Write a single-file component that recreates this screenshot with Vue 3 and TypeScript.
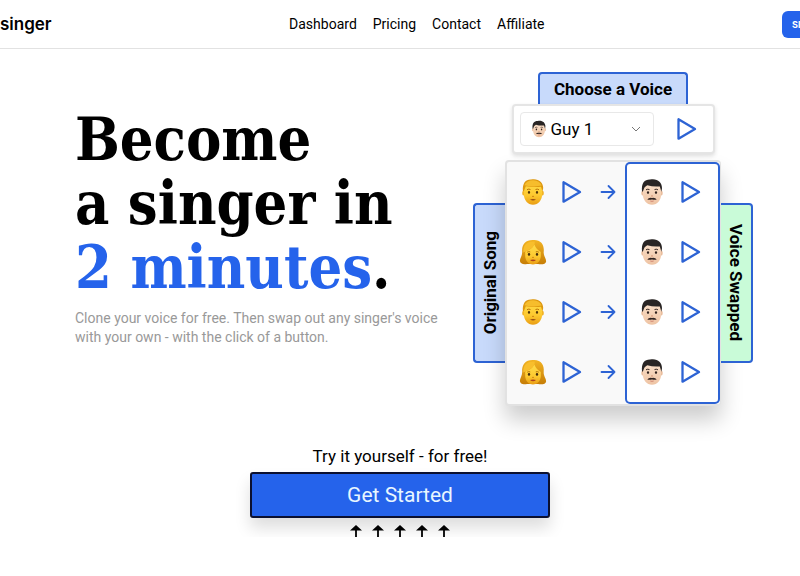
<script setup lang="ts">
import { ref } from 'vue'

interface SongRow {
  id: number
  singer: 'man' | 'woman'
}

const links: string[] = ['Dashboard', 'Pricing', 'Contact', 'Affiliate']
const rows: SongRow[] = [
  { id: 1, singer: 'man' },
  { id: 2, singer: 'woman' },
  { id: 3, singer: 'man' },
  { id: 4, singer: 'woman' },
]
const voice = ref<string>('Guy 1')
</script>

<template>
  <svg class="sprite" aria-hidden="true">
    <defs>
      <linearGradient id="gold" x1="0" y1="0" x2="0" y2="1">
        <stop offset="0" stop-color="#ffdc4a" />
        <stop offset=".6" stop-color="#fdc92f" />
        <stop offset="1" stop-color="#e99d14" />
      </linearGradient>
      <linearGradient id="hair" x1="0" y1="0" x2="0" y2="1">
        <stop offset="0" stop-color="#f3b423" />
        <stop offset="1" stop-color="#c67d06" />
      </linearGradient>
      <linearGradient id="skin" x1="0" y1="0" x2="0" y2="1">
        <stop offset="0" stop-color="#fbe3cd" />
        <stop offset="1" stop-color="#eec3a3" />
      </linearGradient>
    </defs>
    <symbol id="man" viewBox="0 0 28 28">
      <ellipse cx="4.7" cy="15" rx="1.500" ry="2.600" fill="#f0ad20" />
      <ellipse cx="23.300" cy="15" rx="1.500" ry="2.600" fill="#f0ad20" />
      <path d="M4.800 10Q5 3 14 3t9.200 7v6c0 6-4 10.800-9.200 10.800S4.800 22 4.800 16z" fill="url(#gold)" />
      <path d="M3.900 13C3.200 5 6.800 1.300 12 1.500c7-1.500 12.200 2.500 12.200 8.500l-.7 3.500-1.500-4.700Q14 9.500 6.800 8.300L4.900 13z" fill="#dd9810" />
      <path d="M5.300 7.200Q8 2 14.500 2.300q6 .2 8.200 5.300-8 1.800-17.400-.4z" fill="#f6bd2c" />
      <path d="M8 11.700q1.800-1.100 3.500-.2m5 0q1.800-.9 3.500.2" fill="none" stroke="#b87509" stroke-width="1" />
      <ellipse cx="10" cy="14.400" rx="1.100" ry="1.400" fill="#533708" />
      <ellipse cx="18" cy="14.400" rx="1.100" ry="1.400" fill="#533708" />
      <path d="M13 18.200q1 .7 2 0" fill="none" stroke="#cf850e" />
      <path d="M11 21.400q3-.8 6 0-3 2-6 0z" fill="#944b14" />
    </symbol>
    <symbol id="woman" viewBox="0 0 28 28">
      <path d="M3.200 14C2.500 6 7 1.500 14.500 2 22 1.600 25.500 7 24.700 14c-.3 4 2.600 6.500 2.400 9.500-.2 3-5 3.200-8 2.500H8c-4 .8-7.700-.5-7-4 .5-2.500 2-4 2.200-8z" fill="url(#hair)" />
      <path d="M6.200 13.500Q13 11.500 15.300 6.500q2 5 6.500 7.500v4c0 5-4 8.500-7.800 8.500S6.200 23 6.200 18z" fill="url(#gold)" />
      <path d="M4.300 14.500C3.600 7 8 2.800 15.700 3.500q.8 4-4.700 7.800-3.500 1.700-6.700 3.200z" fill="#f8be2c" />
      <path d="M8.200 14.200q1.500-1 3-.3m5.600 0q1.500-.7 3 .3" fill="none" stroke="#aa6807" stroke-width=".9" />
      <ellipse cx="10" cy="16.400" rx="1.200" ry="1.400" fill="#432b0a" />
      <ellipse cx="18" cy="16.400" rx="1.200" ry="1.400" fill="#432b0a" />
      <path d="M13 19.200q1 .7 2 0" fill="none" stroke="#d08a14" />
      <path d="M11 22q3-.9 6 0-3 2.500-6 0z" fill="#b0401d" />
    </symbol>
    <symbol id="guy" viewBox="0 0 28 28">
      <ellipse cx="4.800" cy="15" rx="1.500" ry="2.600" fill="#e7b998" />
      <ellipse cx="23.200" cy="15" rx="1.500" ry="2.600" fill="#e7b998" />
      <path d="M4.800 10Q5 3 14 3t9.200 7v6c0 6-4 10.800-9.200 10.800S4.800 22 4.800 16z" fill="url(#skin)" />
      <path d="M4 13.500C3.200 5 6.500 1.500 12 1.600c7-1.500 12 2.400 12 8.600l-.6 3.500-1.600-5.200q-7 .5-12.500-1.200-2 1-3 2.500L4.900 13.500z" fill="#292524" />
      <path d="M8 11.800q1.800-1.100 3.500-.2m5 0q1.700-.9 3.500.2" fill="none" stroke="#3a2a25" stroke-width="1" />
      <ellipse cx="10" cy="14.600" rx="1.100" ry="1.300" fill="#30211c" />
      <ellipse cx="18" cy="14.600" rx="1.100" ry="1.300" fill="#30211c" />
      <path d="M13 17.800q1 .7 2 0" fill="none" stroke="#d19577" />
      <path d="M9.300 21.600q1.500-2.300 4.700-1.700 3.200-.6 4.700 1.700-2.300.5-4.700-.2-2.400.7-4.700.2z" fill="#302421" />
      <path d="M12.300 23q1.700.7 3.400 0" fill="none" stroke="#c97868" stroke-width=".8" />
    </symbol>
    <symbol id="play" viewBox="0 0 20 24">
      <path d="M1.500 2.300v19.400L18 12z" fill="none" stroke="#2d63d4" stroke-width="2.300" stroke-linejoin="round" />
    </symbol>
    <symbol id="right" viewBox="0 0 16 16">
      <path d="M1.500 8h13M8.500 2l6 6-6 6" fill="none" stroke="#2d63d4" stroke-width="1.800" stroke-linecap="round" stroke-linejoin="round" />
    </symbol>
  </svg>

  <header class="topbar">
    <div class="topbar-row">
      <a class="brand" href="#">singer</a>
      <nav class="links">
        <a v-for="link in links" :key="link" href="#">{{ link }}</a>
      </nav>
      <button class="sign" type="button">SIGN IN</button>
    </div>
  </header>

  <main>
    <section class="hero">
      <div class="copy">
        <h1>Become<br />a singer in<br /><span class="accent">2 minutes</span>.</h1>
        <p>Clone your voice for free. Then swap out any singer's voice<br />with your own - with the click of a button.</p>
      </div>

      <div class="demo">
        <label class="choose" for="voice">Choose a Voice</label>
        <div class="picker">
          <div class="select-box">
            <svg class="mini"><use href="#guy" /></svg>
            <select id="voice" v-model="voice">
              <option>Guy 1</option>
            </select>
            <svg class="chevron" viewBox="0 0 10 10"><path d="M1 3l4 4 4-4" fill="none" stroke="#777" /></svg>
          </div>
          <button class="play" type="button" aria-label="Play voice"><svg><use href="#play" /></svg></button>
        </div>

        <div class="mixer">
          <div class="side original"><span>Original Song</span></div>
          <div class="board">
            <div class="sources">
              <div v-for="row in rows" :key="row.id" class="row">
                <svg class="face"><use :href="'#' + row.singer" /></svg>
                <button class="play" type="button" aria-label="Play original"><svg><use href="#play" /></svg></button>
                <svg class="arrow"><use href="#right" /></svg>
              </div>
            </div>
            <div class="results">
              <div v-for="row in rows" :key="row.id" class="row">
                <svg class="face"><use href="#guy" /></svg>
                <button class="play" type="button" aria-label="Play swapped"><svg><use href="#play" /></svg></button>
              </div>
            </div>
          </div>
          <div class="side swapped"><span>Voice Swapped</span></div>
        </div>
      </div>
    </section>

    <section class="cta">
      <p>Try it yourself - for free!</p>
      <button class="start" type="button">Get Started</button>
      <div class="ups" aria-hidden="true">
        <svg v-for="n in 5" :key="n" viewBox="0 0 12 12">
          <path d="M6 0l6 5.500H6.900V12H5.100V5.500H0z" fill="#000" />
        </svg>
      </div>
    </section>
  </main>
</template>

<style>
body {
  background: #fff;
  overflow-x: hidden;
}
</style>

<style scoped>
* {
  box-sizing: border-box;
}
.sprite {
  position: absolute;
  width: 0;
  height: 0;
}
.topbar,
main,
button,
select {
  font-family: Roboto, "Liberation Sans", sans-serif;
  color: #000;
}
button {
  margin: 0;
  padding: 0;
  border: 0;
  background: none;
  cursor: pointer;
}
.topbar {
  overflow: hidden;
  border-bottom: 1px solid #e2e2e2;
}
.topbar-row {
  display: flex;
  align-items: center;
  justify-content: space-between;
  height: 48px;
  margin-right: -62px;
}
a {
  color: inherit;
  text-decoration: none;
}
.brand {
  font: 600 17px/24px Inter, sans-serif;
}
.links {
  display: flex;
  gap: 16px;
  font-size: 14px;
}
.sign {
  width: 80px;
  height: 27px;
  border-radius: 6px;
  background: #2563eb;
  color: #fff;
  font: 700 9px/27px Inter, sans-serif;
  padding-left: 10px;
  text-align: left;
}
.hero {
  display: flex;
  justify-content: space-between;
  padding: 23px 47px 0 75px;
}
.copy {
  padding-top: 36px;
  white-space: nowrap;
}
h1 {
  margin: 0;
  font: 700 59px/64px "DejaVu Serif Condensed", "DejaVu Serif", serif;
}
.accent {
  color: #2563eb;
}
.copy p {
  margin: 9px 0 0;
  color: #999;
  font-size: 14px;
  line-height: 19px;
}
.demo {
  display: flex;
  flex-direction: column;
  align-items: center;
}
.choose {
  padding: 0 14px;
  border: 2px solid #2d63d4;
  border-bottom: 0;
  border-radius: 4px 4px 0 0;
  background: #c8dafb;
  font-size: 17px;
  font-weight: 700;
  line-height: 30px;
}
.picker {
  display: flex;
  align-items: center;
  justify-content: space-between;
  width: 203px;
  height: 50px;
  padding: 0 16px 0 6px;
  border: 2px solid #e5e5e5;
  border-radius: 4px;
  background: #fff;
  box-shadow: 0 2px 4px #0002;
}
.select-box {
  display: flex;
  align-items: center;
  gap: 3px;
  width: 134px;
  height: 34px;
  padding: 0 12px 0 9px;
  border: 1px solid #e8e8e8;
  border-radius: 4px;
}
.mini {
  width: 18px;
  height: 18px;
}
select {
  flex: 1;
  min-width: 0;
  padding: 0;
  border: 0;
  appearance: none;
  background: none;
  font-size: 17px;
}
.chevron {
  width: 10px;
  height: 10px;
}
.play,
.play svg {
  display: block;
  width: 20px;
  height: 24px;
}
.mixer {
  display: flex;
  align-items: center;
  margin-top: 6px;
}
.side {
  display: flex;
  align-items: center;
  justify-content: center;
  width: 32px;
  height: 160px;
  border: 2px solid #2d63d4;
  font-size: 17px;
  font-weight: 700;
  writing-mode: vertical-rl;
}
.original {
  border-right: 0;
  border-radius: 4px 0 0 4px;
  background: #c8dafb;
}
.original span {
  transform: rotate(180deg);
}
.swapped {
  border-left: 0;
  border-radius: 0 4px 4px 0;
  background: #c9fbd8;
}
.board {
  display: flex;
  width: 216px;
  height: 246px;
  border: 2px solid #e2e2e2;
  border-right: 1px solid #e2e2e2;
  border-radius: 4px;
  background: #f9f9f9;
  box-shadow: 0 14px 22px #0003;
}
.sources {
  flex: 1;
}
.results {
  width: 95px;
  border-radius: 5px;
  background: #fff;
  box-shadow: inset 0 0 0 2px #2d63d4;
}
.row {
  display: flex;
  align-items: center;
  height: 60px;
}
.sources .row {
  gap: 15px;
  padding-left: 12px;
}
.sources .arrow {
  margin-left: 3px;
}
.results .row {
  gap: 15px;
  padding-left: 13px;
}
.face {
  width: 28px;
  height: 28px;
}
.arrow {
  width: 16px;
  height: 16px;
}
.cta {
  display: flex;
  flex-direction: column;
  align-items: center;
  padding-top: 40px;
}
.cta p {
  margin: 0 0 6px;
  font-size: 17px;
  line-height: 20px;
}
.start {
  width: 300px;
  height: 46px;
  border: 2px solid #0b1030;
  border-radius: 3px;
  background: #2563eb;
  color: #e8f6ff;
  font-size: 21px;
  box-shadow: 0 10px 16px #0002;
}
.ups {
  display: flex;
  gap: 10px;
  margin-top: 7px;
}
.ups svg {
  width: 12px;
  height: 12px;
}
</style>
